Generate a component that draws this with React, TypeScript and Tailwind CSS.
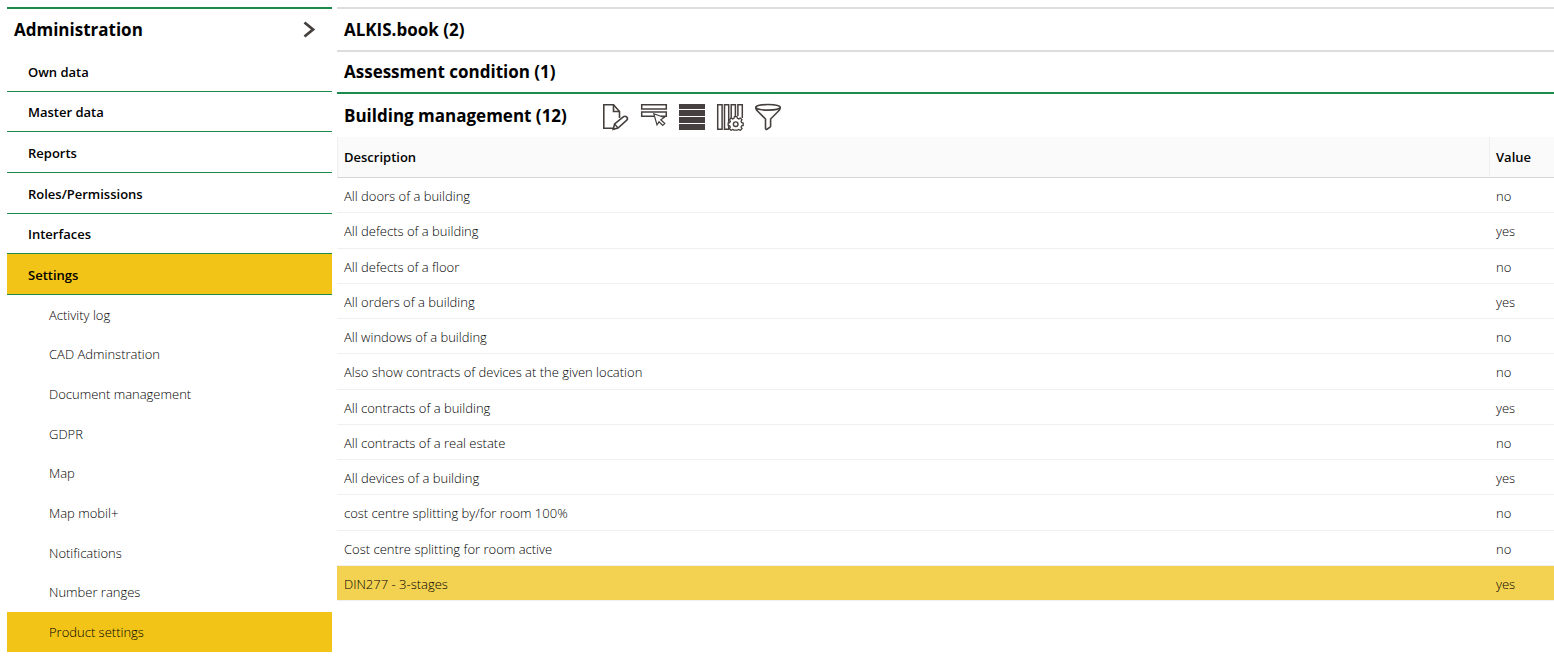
import React from 'react';
import { clsx } from 'clsx';

const mainItems = ['Own data', 'Master data', 'Reports', 'Roles/Permissions', 'Interfaces', 'Settings'];

const settingsItems = [
  'Activity log',
  'CAD Adminstration',
  'Document management',
  'GDPR',
  'Map',
  'Map mobil+',
  'Notifications',
  'Number ranges',
  'Product settings',
];

const rows = [
  { description: 'All doors of a building', value: 'no' },
  { description: 'All defects of a building', value: 'yes' },
  { description: 'All defects of a floor', value: 'no' },
  { description: 'All orders of a building', value: 'yes' },
  { description: 'All windows of a building', value: 'no' },
  { description: 'Also show contracts of devices at the given location', value: 'no' },
  { description: 'All contracts of a building', value: 'yes' },
  { description: 'All contracts of a real estate', value: 'no' },
  { description: 'All devices of a building', value: 'yes' },
  { description: 'cost centre splitting by/for room 100%', value: 'no' },
  { description: 'Cost centre splitting for room active', value: 'no' },
  { description: 'DIN277 - 3-stages', value: 'yes' },
];

function EditIcon() {
  return (
    <svg viewBox="0 0 28 28" className="size-7" fill="none" stroke="#45403d" strokeWidth="1.6">
      <path d="M11 25.2H1.8V1.8H11.5L17.5 8.5V15" />
      <path d="M11.5 1.8V8.5H17.5" />
      <path d="M11.2 26.3L12.6 21L21.6 13.6Q23 12.6 24.8 14.1Q26.2 15.8 24.8 17.2L16 25Z" fill="#fff" />
      <path d="M12.6 21L16 25" strokeWidth="1.2" />
    </svg>
  );
}

function SelectRowIcon() {
  return (
    <svg viewBox="0 0 28 28" className="size-7" fill="none" stroke="#45403d" strokeWidth="1.5">
      <path d="M1.7 1.8H26.3V6H1.7ZM14 13.2H1.7V9H26.3V13.2H21" />
      <path d="M13.8 10.7L24.2 14.5L20.8 16.8L24.8 20.6L22.7 22.5L19 18.8L17 21.8Z" fill="#fff" strokeWidth="1.2" />
    </svg>
  );
}

function RowsIcon() {
  return (
    <svg viewBox="0 0 28 28" className="size-7" fill="#45403d">
      <path d="M1 1H27V6H1ZM1 7H27V13H1ZM1 14H27V20H1ZM1 21H27V27H1Z" />
    </svg>
  );
}

function ColumnsIcon() {
  return (
    <svg viewBox="0 0 28 28" className="size-7" fill="none" stroke="#45403d" strokeWidth="1.5">
      <path d="M1.7 1.7H6.1V26.3H1.7ZM8.5 1.7H12.7V26.3H8.5ZM15.2 15V1.7H19.4V13M21.9 13V1.7H26.3V15" />
      <path
        d="M18.4 13.7H21L21.4 15.3L22.8 15.9L24.3 15L26 16.7L25.1 18.2L25.7 19.6L27.2 20V22.4L25.7 22.8L25.1 24.2L26 25.7L24.3 27.3L22.8 26.5L21.4 27.1H18L16.6 26.5L15.1 27.3L13.4 25.7L14.3 24.2L13.7 22.8L12.2 22.4V20L13.7 19.6L14.3 18.2L13.4 16.7L15.1 15L16.6 15.9L18 15.3Z"
        fill="#fff"
        strokeWidth="1.3"
      />
      <circle cx="19.7" cy="21.2" r="2.3" strokeWidth="1.4" />
    </svg>
  );
}

function FilterIcon() {
  return (
    <svg viewBox="0 0 28 28" className="size-7" fill="none" stroke="#45403d" strokeWidth="1.6">
      <ellipse cx="14" cy="4.3" rx="12.3" ry="2.8" />
      <path d="M1.7 4.3Q1.8 6.8 3.5 8L11.5 16V25.5Q11.7 27 13.3 26L16 24.2Q16.6 23.7 16.6 22.8V16L24.5 8Q26.2 6.8 26.3 4.3" />
    </svg>
  );
}

const tools = [
  { label: 'Edit', icon: <EditIcon /> },
  { label: 'Select row', icon: <SelectRowIcon /> },
  { label: 'Rows', icon: <RowsIcon /> },
  { label: 'Columns', icon: <ColumnsIcon /> },
  { label: 'Filter', icon: <FilterIcon /> },
];

function Sidebar() {
  return (
    <nav className="w-[325px] shrink-0 border-t-2 border-[#1b8a4b]">
      <button type="button" className="flex h-[42px] w-full items-center justify-between pl-[7px] pr-4 text-left">
        <span className="text-[17px] font-bold">Administration</span>
        <svg viewBox="0 0 14 18" className="h-[18px] w-[14px]" fill="none" stroke="#45403d" strokeWidth="2.8">
          <path d="M2.5 1.5L11 8.5L2.5 15.5" />
        </svg>
      </button>
      <ul className="grid min-h-[244px] auto-rows-fr">
        {mainItems.map((item) => (
          <li key={item} className={clsx('border-b border-[#1b8a4b]', item === 'Settings' && 'bg-[#f2c418]')}>
            <a href="#" className="flex h-full items-center pl-[21px] pt-[2px] font-semibold">
              {item}
            </a>
          </li>
        ))}
      </ul>
      <ul className="grid min-h-[357px] auto-rows-fr">
        {settingsItems.map((item) => (
          <li key={item} className={clsx(item === 'Product settings' && 'bg-[#f2c418]')}>
            <a href="#" className="flex h-full items-center pl-[42px] font-light">
              {item}
            </a>
          </li>
        ))}
      </ul>
    </nav>
  );
}

function SettingsTable() {
  return (
    <table className="h-[464px] w-full table-fixed border-separate border-spacing-0 text-left">
      <thead>
        <tr className="h-[41px] bg-[#fafafa]">
          <th className="border-b border-l border-b-[#d5d5d5] border-l-[#efefef] pl-[6px] font-semibold">Description</th>
          <th className="w-[65px] border-b border-l border-b-[#d5d5d5] border-l-[#efefef] pl-[6px] font-semibold">Value</th>
        </tr>
      </thead>
      <tbody className="font-light">
        {rows.map((row, index) => (
          <tr key={row.description} className={clsx(index === rows.length - 1 && 'bg-[#f4d251]')}>
            <td className="border-b border-[#f0f0f0] pl-[7px] pt-[2px]">{row.description}</td>
            <td className="border-b border-[#f0f0f0] pl-[7px] pt-[2px]">{row.value}</td>
          </tr>
        ))}
      </tbody>
    </table>
  );
}

export function App() {
  return (
    <div className="flex min-h-screen gap-[5px] bg-white pl-[7px] pt-[7px] font-['Open_Sans','Noto_Sans',sans-serif] text-[13px] leading-5 text-black">
      <Sidebar />
      <main className="min-w-0 flex-1">
        <h2 className="flex h-[43px] items-center border-t-2 border-[#dddddd] pl-[7px] text-[17px] font-bold">
          ALKIS.book (2)
        </h2>
        <h2 className="flex h-[42px] items-center border-t-2 border-[#dddddd] pl-[7px] text-[17px] font-bold">
          Assessment condition (1)
        </h2>
        <section>
          <div className="flex h-[45px] items-center gap-[35px] border-t-2 border-[#1b8a4b] pl-[7px]">
            <h2 className="text-[17px] font-bold">Building management (12)</h2>
            <div className="flex gap-[10px] pt-[2px]">
              {tools.map((tool) => (
                <button key={tool.label} type="button" aria-label={tool.label}>
                  {tool.icon}
                </button>
              ))}
            </div>
          </div>
          <SettingsTable />
        </section>
      </main>
    </div>
  );
}

export default App;
